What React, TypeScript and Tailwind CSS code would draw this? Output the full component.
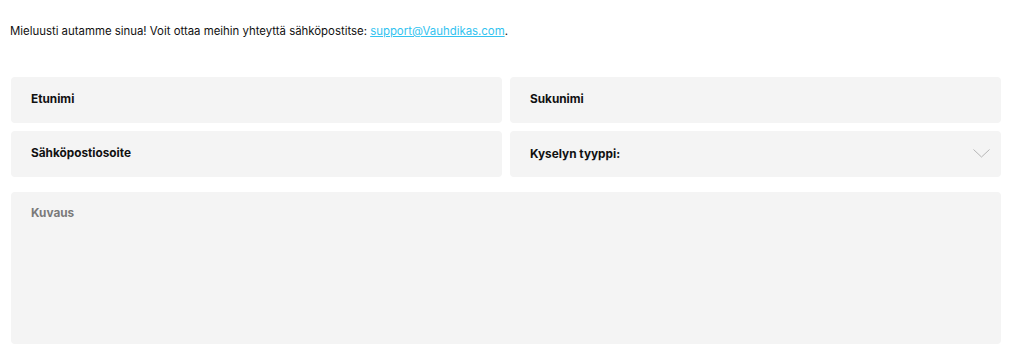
import React from 'react';

const Field = ({ label }: { label: string }) => (
  <div className="h-[46px] rounded-[4px] bg-[#f4f4f4] flex items-center pl-[20px] text-[11.8px] font-bold text-[#111]">
    {label}
  </div>
);

export default function App() {
  return (
    <div className="bg-white w-[1024px] h-[359px] pl-[11px] pt-[22px]" style={{ fontFamily: 'Inter, "Noto Sans", sans-serif' }}>
      <p className="text-[11.4px] text-[#111] -ml-px h-[18px] leading-[18px]">
        Mieluusti autamme sinua! Voit ottaa meihin yhteyttä sähköpostitse:{' '}
        <a href="#" className="text-[#33c3f0] underline">support@Vauhdikas.com</a>.
      </p>
      <div className="w-[990px] mt-[37px] flex flex-col">
        <div className="grid grid-cols-2 gap-x-[8px] gap-y-[8px]">
          <Field label="Etunimi" />
          <Field label="Sukunimi" />
          <Field label="Sähköpostiosoite" />
          <div className="h-[46px] rounded-[4px] bg-[#f4f4f4] flex items-center justify-between pl-[20px] pr-[11px] text-[11.8px] font-bold text-[#111]">
            <span className="mt-[2px]">Kyselyn tyyppi:</span>
            <svg width="17" height="9" viewBox="0 0 17 9" fill="none" className="-mt-[2px]">
              <path d="M0.5 0.5 L8.5 8 L16.5 0.5" stroke="#b5b5b5" strokeWidth="1" />
            </svg>
          </div>
        </div>
        <div className="mt-[15px] h-[152px] rounded-[4px] bg-[#f4f4f4] pl-[20px] pt-[13px] text-[11.8px] font-bold text-[#7a7a7a]">
          Kuvaus
        </div>
      </div>
    </div>
  );
}
